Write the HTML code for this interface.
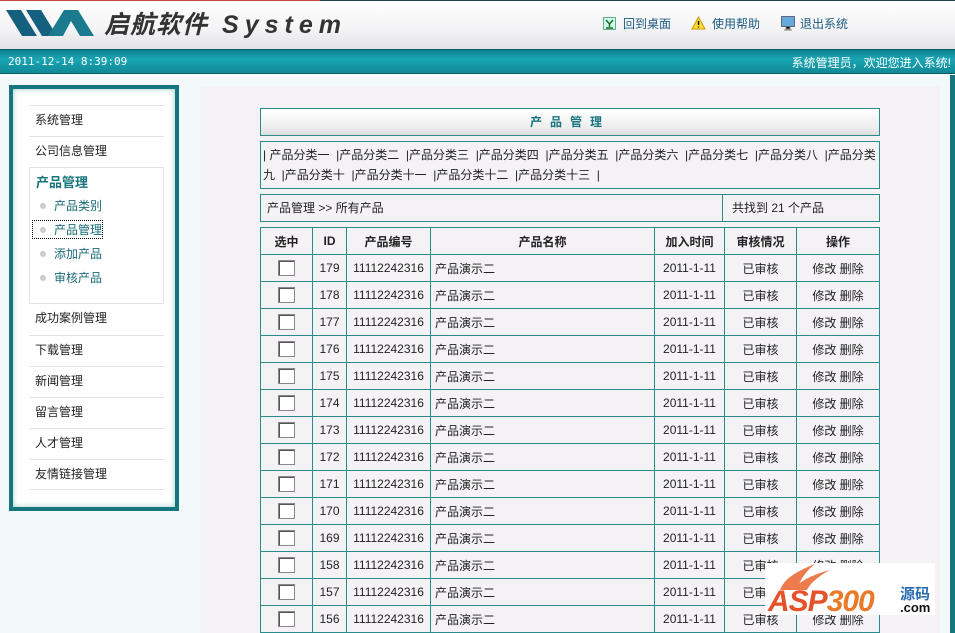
<!DOCTYPE html>
<html><head><meta charset="utf-8"><style>
*{margin:0;padding:0;box-sizing:border-box}
body{width:955px;height:633px;overflow:hidden;background:#f3f8fa;font-family:"Liberation Sans","Noto Sans CJK SC","WenQuanYi Zen Hei",sans-serif;font-size:12px;color:#222;position:relative}
.hdr{position:absolute;left:0;top:0;width:955px;height:49px;background:linear-gradient(#fff,#f4f4f6 60%,#e2e2e6)}
.topline{position:absolute;left:0;top:0;width:320px;height:1px;background:#c44}
.topline2{position:absolute;left:320px;top:0;width:635px;height:1px;background:#244}
.bar{position:absolute;left:0;top:49px;width:955px;height:25px;background:linear-gradient(#0d7f8c,#19a6b4 40%,#108896);border-top:1px solid #0a5f68;border-bottom:1px solid #0b5c64;color:#fff}
.logo{position:absolute;left:104px;top:5px;font-size:25px;font-style:italic;font-weight:bold;color:#333;letter-spacing:1px}
.logo b{letter-spacing:6px;margin-left:14px}
.nav{position:absolute;top:15px;font-size:12px;color:#1b5a80}
.side{position:absolute;left:9px;top:85px;width:170px;height:426px;border:4px solid #17757d;background:#fff;box-shadow:inset 0 0 6px #9cc}
.side .it{position:absolute;left:16px;width:135px;height:31px;border-top:1px solid #e3e3e3;font-size:12px;line-height:29px;padding-left:6px;color:#222}
.sub{position:absolute;left:16px;top:78px;width:135px;height:137px;border:1px solid #e3e3e3}
.sub .t{position:absolute;left:6px;top:4px;font-weight:bold;color:#17757d;font-size:13px}
.sub .s{position:absolute;left:24px;color:#1a6a78;font-size:12px}
.sub .d{position:absolute;left:10px;width:6px;height:6px;border-radius:3px;background:#ccc}
.main{position:absolute;left:200px;top:86px;width:740px;height:547px;background:#f4f2f5}
.rb{position:absolute;left:950px;top:75px;width:5px;height:558px;background:#17757d}
.box{position:absolute;left:260px;width:620px;border:1px solid #2a8b8b;background:#f4f2f5}
table{position:absolute;left:260px;top:227px;border-collapse:collapse;width:620px;background:#f4f2f5}
td,th{border:1px solid #2a8b8b;height:27px;font-size:12px;text-align:center;padding:0}
th{font-weight:bold}
td.l{text-align:left;padding-left:4px}
.cb{display:inline-block;width:17px;height:16px;border:1px solid #888;background:#fff;box-shadow:inset 1px 1px 0 #555;vertical-align:middle}
</style></head><body>
<div class="hdr"></div><div class="topline"></div><div class="topline2"></div>
<svg style="position:absolute;left:4px;top:8px" width="92" height="30" viewBox="0 0 92 30"><path d="M2 2h15l16 26H18z M22 2h15l16 26H38z" fill="#15607e"/><path d="M44 28L60 2h14l16 26H76L67 13 59 28z" fill="#1b7a8e"/></svg>
<div class="logo">启航软件<b>System</b></div>
<svg style="position:absolute;left:603px;top:17px" width="13" height="13"><rect x=".5" y=".5" width="12" height="12" fill="#cfe" stroke="#6a8"/><path d="M3 3l3.5 4L10 3M6.5 7v3M3 11h7" stroke="#262" stroke-width="1.5" fill="none"/></svg>
<div class="nav" style="left:623px">回到桌面</div>
<svg style="position:absolute;left:691px;top:16px" width="15" height="14"><path d="M7.5 1L14 13H1z" fill="#fd3" stroke="#c90"/><path d="M7.5 5v4M7.5 10.5v1" stroke="#000" stroke-width="1.4"/></svg>
<div class="nav" style="left:712px">使用帮助</div>
<svg style="position:absolute;left:781px;top:16px" width="14" height="15"><rect x=".5" y=".5" width="13" height="10" fill="#6ad" stroke="#667"/><path d="M5 11v2h4v-2M3 14h8" stroke="#888"/></svg>
<div class="nav" style="left:800px">退出系统</div>
<div class="bar"><span style="position:absolute;left:8px;top:5px;font-family:'DejaVu Sans Mono','Liberation Mono',monospace;font-size:11px">2011-12-14 8:39:09</span><span style="position:absolute;right:4px;top:4px">系统管理员，欢迎您进入系统!</span></div>
<div class="side">
<div class="it" style="top:16px">系统管理</div>
<div class="it" style="top:47px">公司信息管理</div>
<div class="sub"><div class="t">产品管理</div>
<div class="d" style="top:35px"></div><div class="s" style="top:29px">产品类别</div>
<div class="d" style="top:59px"></div><div class="s" style="top:53px;outline:1px dotted #000;left:3px;padding-left:21px">产品管理</div>
<div class="d" style="top:83px"></div><div class="s" style="top:77px">添加产品</div>
<div class="d" style="top:107px"></div><div class="s" style="top:101px">审核产品</div></div>
<div class="it" style="top:215px;border-top:none">成功案例管理</div>
<div class="it" style="top:246px">下载管理</div>
<div class="it" style="top:277px">新闻管理</div>
<div class="it" style="top:308px">留言管理</div>
<div class="it" style="top:339px">人才管理</div>
<div class="it" style="top:370px;border-bottom:1px solid #e3e3e3">友情链接管理</div>
</div>
<div class="main"></div><div class="rb"></div>
<div class="box" style="top:108px;height:28px;background:linear-gradient(#fff,#eee 70%,#ddd);text-align:center;line-height:26px;font-weight:bold;color:#17757d;letter-spacing:8px;font-size:12px">产品管理</div>
<div class="box" style="top:141px;height:48px;padding:3px 2px;line-height:20px;word-break:break-all">|&nbsp;产品分类一&nbsp;&nbsp;|产品分类二&nbsp;&nbsp;|产品分类三&nbsp;&nbsp;|产品分类四&nbsp;&nbsp;|产品分类五&nbsp;&nbsp;|产品分类六&nbsp;&nbsp;|产品分类七&nbsp;&nbsp;|产品分类八&nbsp;&nbsp;|产品分类九&nbsp;&nbsp;|产品分类十&nbsp;&nbsp;|产品分类十一&nbsp;&nbsp;|产品分类十二&nbsp;&nbsp;|产品分类十三&nbsp;&nbsp;|</div>
<div class="box" style="top:194px;height:28px;line-height:26px;padding-left:6px">产品管理 &gt;&gt; 所有产品<div style="position:absolute;left:461px;top:0;height:26px;border-left:1px solid #2a8b8b;padding-left:9px;width:158px">共找到 21 个产品</div></div>
<table>
<tr><th style="width:52px">选中</th><th style="width:34px">ID</th><th style="width:84px">产品编号</th><th style="width:224px">产品名称</th><th style="width:70px">加入时间</th><th style="width:72px">审核情况</th><th>操作</th></tr>
<tr><td><span class="cb"></span></td><td>179</td><td>11112242316</td><td class="l">产品演示二</td><td>2011-1-11</td><td>已审核</td><td>修改 删除</td></tr>
<tr><td><span class="cb"></span></td><td>178</td><td>11112242316</td><td class="l">产品演示二</td><td>2011-1-11</td><td>已审核</td><td>修改 删除</td></tr>
<tr><td><span class="cb"></span></td><td>177</td><td>11112242316</td><td class="l">产品演示二</td><td>2011-1-11</td><td>已审核</td><td>修改 删除</td></tr>
<tr><td><span class="cb"></span></td><td>176</td><td>11112242316</td><td class="l">产品演示二</td><td>2011-1-11</td><td>已审核</td><td>修改 删除</td></tr>
<tr><td><span class="cb"></span></td><td>175</td><td>11112242316</td><td class="l">产品演示二</td><td>2011-1-11</td><td>已审核</td><td>修改 删除</td></tr>
<tr><td><span class="cb"></span></td><td>174</td><td>11112242316</td><td class="l">产品演示二</td><td>2011-1-11</td><td>已审核</td><td>修改 删除</td></tr>
<tr><td><span class="cb"></span></td><td>173</td><td>11112242316</td><td class="l">产品演示二</td><td>2011-1-11</td><td>已审核</td><td>修改 删除</td></tr>
<tr><td><span class="cb"></span></td><td>172</td><td>11112242316</td><td class="l">产品演示二</td><td>2011-1-11</td><td>已审核</td><td>修改 删除</td></tr>
<tr><td><span class="cb"></span></td><td>171</td><td>11112242316</td><td class="l">产品演示二</td><td>2011-1-11</td><td>已审核</td><td>修改 删除</td></tr>
<tr><td><span class="cb"></span></td><td>170</td><td>11112242316</td><td class="l">产品演示二</td><td>2011-1-11</td><td>已审核</td><td>修改 删除</td></tr>
<tr><td><span class="cb"></span></td><td>169</td><td>11112242316</td><td class="l">产品演示二</td><td>2011-1-11</td><td>已审核</td><td>修改 删除</td></tr>
<tr><td><span class="cb"></span></td><td>158</td><td>11112242316</td><td class="l">产品演示二</td><td>2011-1-11</td><td>已审核</td><td>修改 删除</td></tr>
<tr><td><span class="cb"></span></td><td>157</td><td>11112242316</td><td class="l">产品演示二</td><td>2011-1-11</td><td>已审核</td><td>修改 删除</td></tr>
<tr><td><span class="cb"></span></td><td>156</td><td>11112242316</td><td class="l">产品演示二</td><td>2011-1-11</td><td>已审核</td><td>修改 删除</td></tr>
</table>
<div style="position:absolute;left:765px;top:563px;width:170px;height:52px;background:#fff"></div>
<svg style="position:absolute;left:775px;top:562px" width="60" height="30"><path d="M5 28C10 15 25 8 40 2C30 10 25 18 22 28zM18 28C25 18 40 12 55 8C42 15 35 22 32 28z" fill="#e85a20" opacity=".8"/></svg>
<div style="position:absolute;left:768px;top:585px;font-size:30px;font-weight:bold;font-style:italic;color:#e8502a;letter-spacing:-1px">ASP<span style="color:#e87a2a">300</span></div>
<div style="position:absolute;left:900px;top:583px;font-size:15px;font-weight:bold;color:#2a6cb0">源码</div>
<div style="position:absolute;left:900px;top:600px;font-size:13px;font-weight:bold;color:#111">.com</div>
</body></html>
